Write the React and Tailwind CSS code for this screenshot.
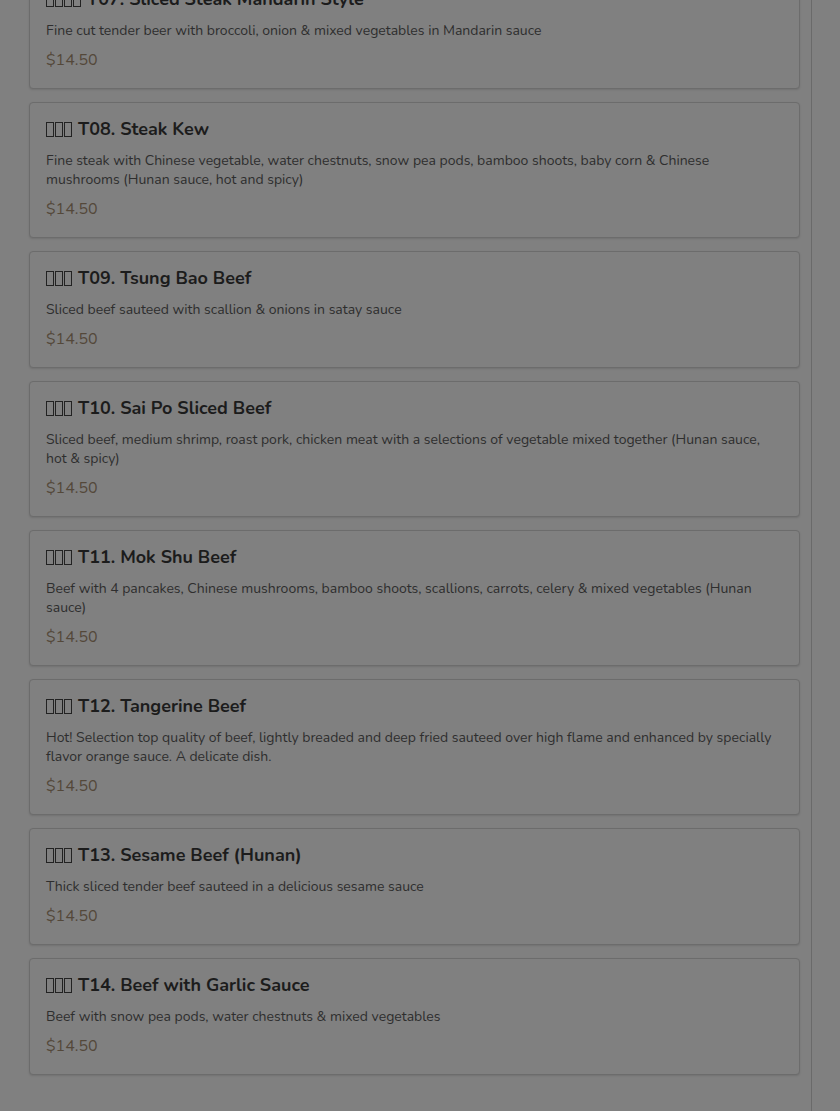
const items = [
  {
    code: "T07",
    name: "Sliced Steak Mandarin Style",
    boxes: 4,
    desc: "Fine cut tender beer with broccoli, onion & mixed vegetables in Mandarin sauce",
  },
  {
    code: "T08",
    name: "Steak Kew",
    boxes: 3,
    desc: "Fine steak with Chinese vegetable, water chestnuts, snow pea pods, bamboo shoots, baby corn & Chinese mushrooms (Hunan sauce, hot and spicy)",
  },
  {
    code: "T09",
    name: "Tsung Bao Beef",
    boxes: 3,
    desc: "Sliced beef sauteed with scallion & onions in satay sauce",
  },
  {
    code: "T10",
    name: "Sai Po Sliced Beef",
    boxes: 3,
    desc: "Sliced beef, medium shrimp, roast pork, chicken meat with a selections of vegetable mixed together (Hunan sauce, hot & spicy)",
  },
  {
    code: "T11",
    name: "Mok Shu Beef",
    boxes: 3,
    desc: "Beef with 4 pancakes, Chinese mushrooms, bamboo shoots, scallions, carrots, celery & mixed vegetables (Hunan sauce)",
  },
  {
    code: "T12",
    name: "Tangerine Beef",
    boxes: 3,
    desc: "Hot! Selection top quality of beef, lightly breaded and deep fried sauteed over high flame and enhanced by specially flavor orange sauce. A delicate dish.",
  },
  {
    code: "T13",
    name: "Sesame Beef (Hunan)",
    boxes: 3,
    desc: "Thick sliced tender beef sauteed in a delicious sesame sauce",
  },
  {
    code: "T14",
    name: "Beef with Garlic Sauce",
    boxes: 3,
    desc: "Beef with snow pea pods, water chestnuts & mixed vegetables",
  },
];

function Tofu({ count }) {
  return (
    <span className="inline-flex gap-[1px] mr-[6px] align-[-2px]">
      {Array.from({ length: count }).map((_, i) => (
        <span
          key={i}
          className="inline-block w-[8px] h-[15px] border-[1.5px] border-[#222]"
        />
      ))}
    </span>
  );
}

function MenuCard({ item }) {
  return (
    <div className="border border-[#6c6c6c] rounded-[4px] bg-[#808080] shadow-[0_1px_2px_rgba(0,0,0,0.12)] px-4 pt-[15px] pb-4">
      <h3 className="text-[18px] leading-[22px] font-bold text-[#1c1c1c]">
        <Tofu count={item.boxes} />
        {item.code}. {item.name}
      </h3>
      <p className="mt-[11px] text-[14px] leading-[19px] text-[#2e2e2e]">
        {item.desc}
      </p>
      <div className="mt-[8px] text-[16px] leading-[24px] text-[#54483a]">
        $14.50
      </div>
    </div>
  );
}

export default function App() {
  return (
    <div
      className="h-[1111px] overflow-hidden bg-[#808080] flex"
      style={{ fontFamily: "Nunito, Lato, 'Open Sans', sans-serif" }}
    >
      <div className="w-[812px] shrink-0 border-r border-[#6a6a6a] pl-[29px] pr-[11px]">
        <div className="-mt-[28px] flex flex-col gap-[13px]">
          {items.map((item) => (
            <MenuCard key={item.code} item={item} />
          ))}
        </div>
      </div>
      <div className="flex-1" />
    </div>
  );
}
